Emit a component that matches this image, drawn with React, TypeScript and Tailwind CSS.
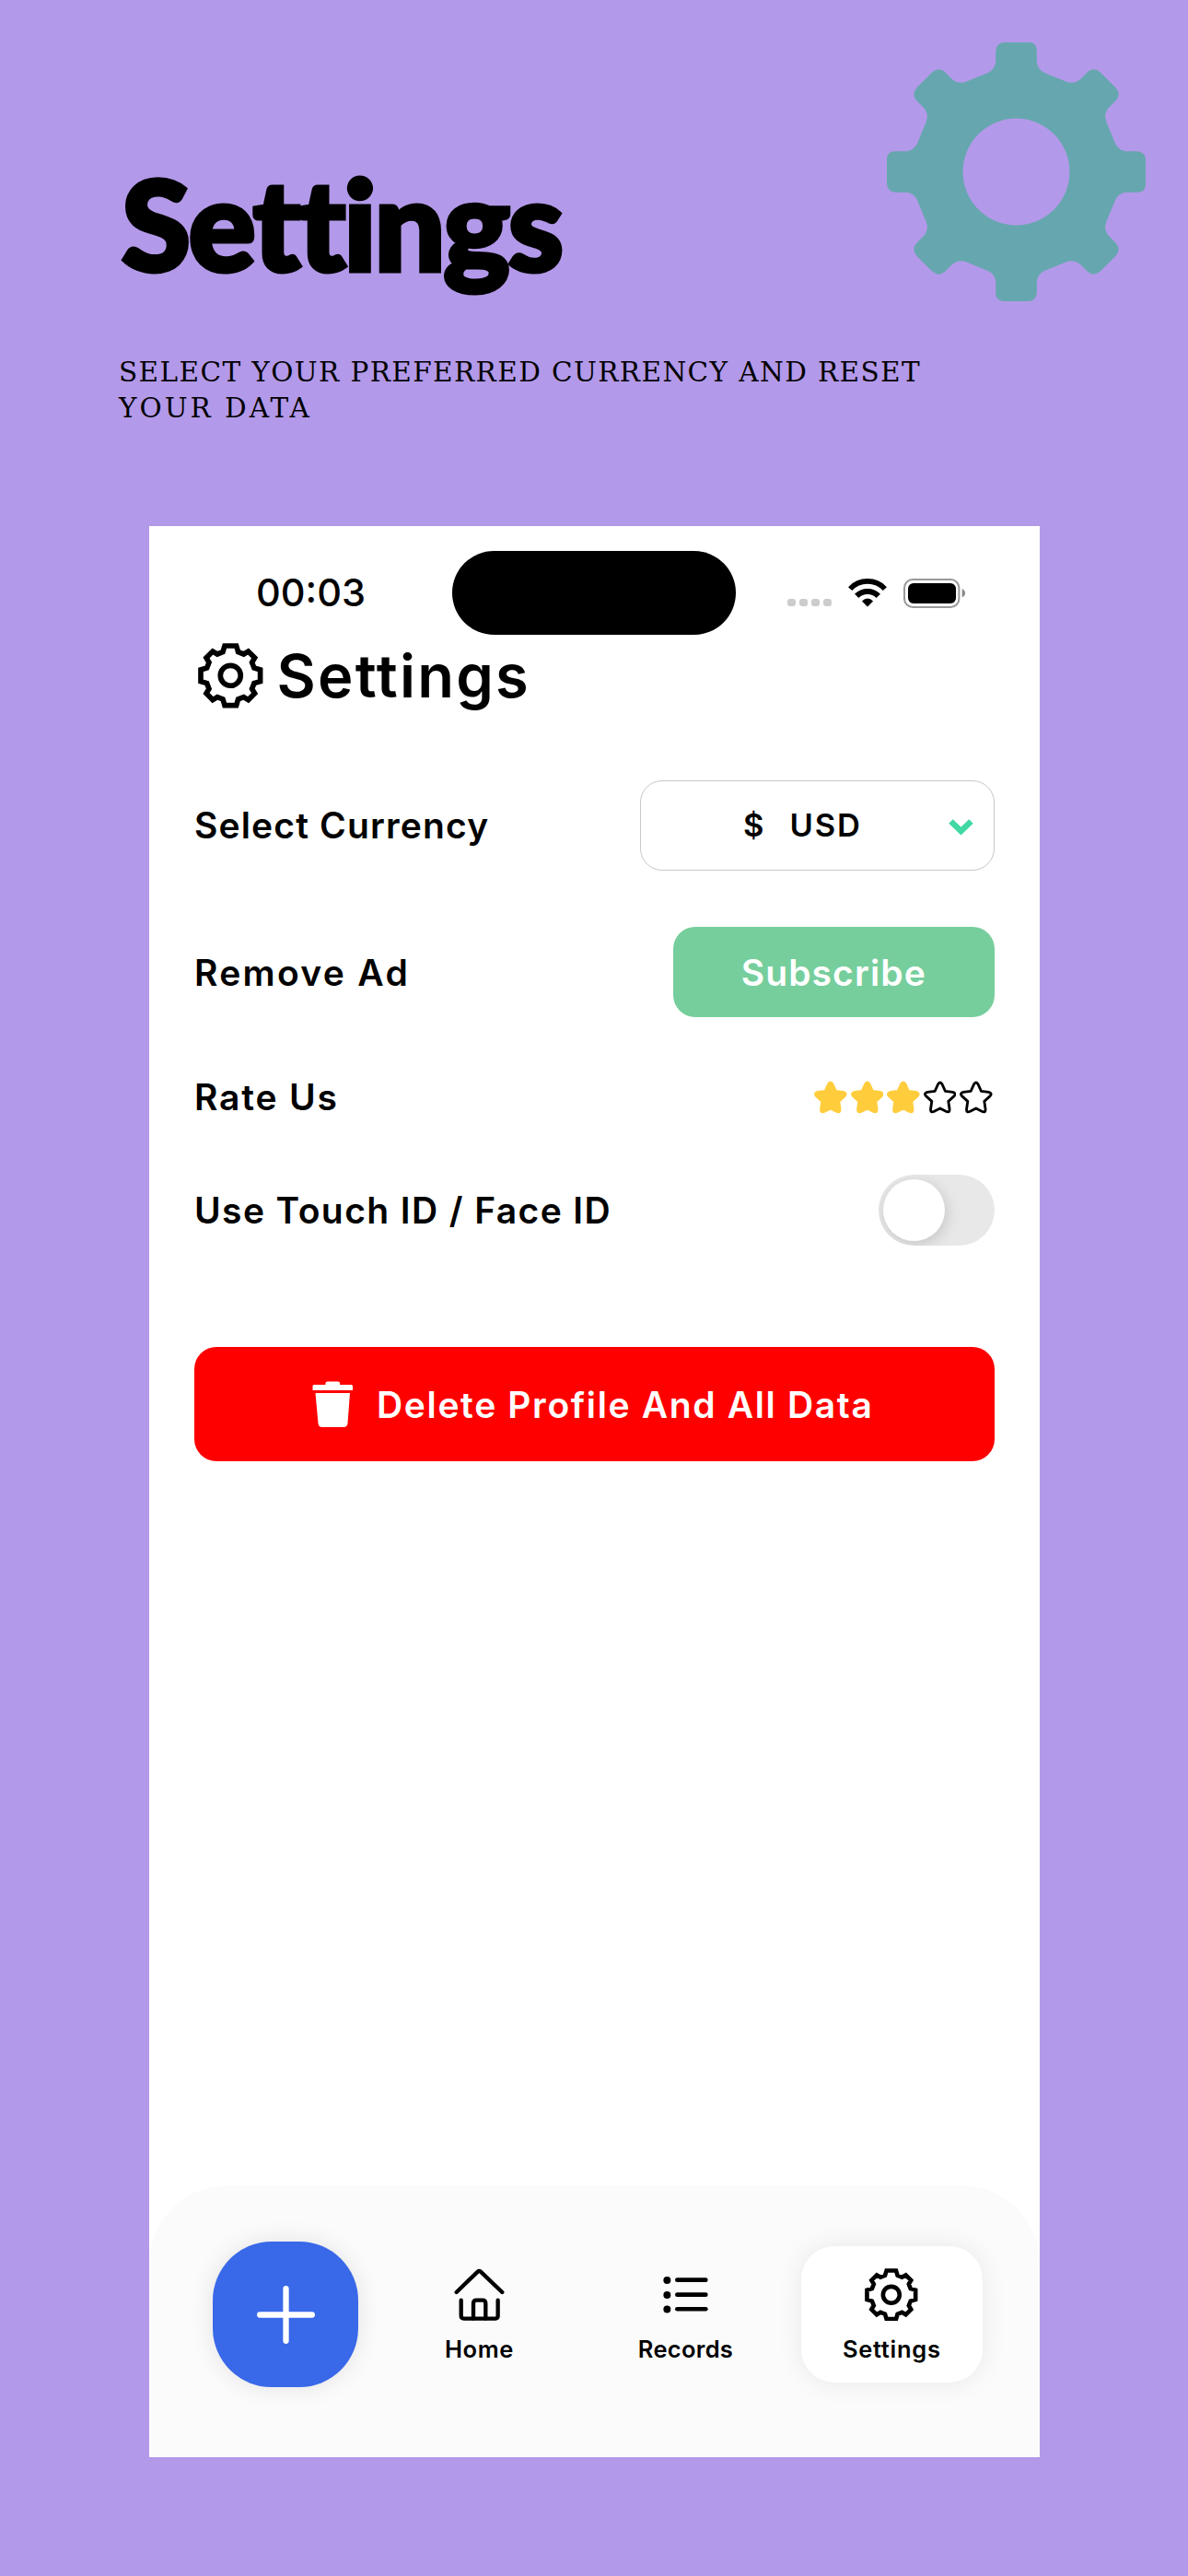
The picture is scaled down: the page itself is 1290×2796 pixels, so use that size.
import type { ReactNode } from 'react';

type Point = [number, number];

// Each gear is one quarter of its outline, turned around the centre four times.
const turn = ([x, y]: Point, times: number): Point => {
  let p: Point = [x, y];
  for (let i = 0; i < times; i++) p = [-p[1], p[0]];
  return p;
};

const coverQuarter: [string, Point[]][] = [
  ['L', [[43, -422]]],
  ['Q', [[67, -420], [67, -396]]],
  ['L', [[67, -358]]],
  ['Q', [[69, -334], [92, -323]]],
  ['L', [[162, -294]]],
  ['Q', [[187, -284], [208, -301]]],
  ['L', [[231, -324]]],
  ['Q', [[252, -344], [275, -324]]],
  ['L', [[324, -275]]],
  ['Q', [[344, -252], [324, -231]]],
  ['L', [[301, -208]]],
  ['Q', [[284, -187], [294, -162]]],
  ['L', [[323, -92]]],
  ['Q', [[334, -69], [358, -67]]],
  ['L', [[394, -67]]],
  ['Q', [[420, -65], [422, -40]]],
  ['L', [[422, 0]]],
];

const coverGearPath =
  'M0 -422' +
  [0, 1, 2, 3]
    .map((n) => coverQuarter.map(([cmd, pts]) => cmd + pts.map((p) => turn(p, n).join(' ')).join(' ')).join(''))
    .join('') +
  'Z';

const outlineQuarter: Point[] = [
  [19, -97], [25, -77], [43, -70], [58, -79], [79, -58], [70, -43], [77, -25], [97, -19],
];

const gearPoints = [0, 1, 2, 3]
  .flatMap((n) => outlineQuarter.map((p) => turn(p, n).join(',')))
  .join(' ');

function CoverGear() {
  return (
    <svg viewBox="-422 -422 844 844" className="size-[281px] shrink-0">
      <path d={coverGearPath} fill="#66a7af" />
      <circle r="174" fill="#b399e9" />
    </svg>
  );
}

function GearIcon({ className }: { className: string }) {
  return (
    <svg viewBox="-106 -106 212 212" fill="none" stroke="#000" strokeWidth="17" className={className}>
      <polygon points={gearPoints} />
      <circle r="33" />
    </svg>
  );
}

function WifiIcon() {
  return (
    <svg viewBox="784 203 124 92" fill="none" stroke="#000" strokeWidth="17" className="h-[31px] w-[42px]">
      <path d="M790 236A77 77 0 0 1 902 236" />
      <path d="M811 259A49 49 0 0 1 881 259" strokeWidth="18" />
      <path d="M828 276Q846 257 864 276L848 292Q846 294 844 292Z" fill="#000" stroke="none" />
    </svg>
  );
}

function BatteryIcon() {
  return (
    <svg viewBox="963 201 202 96" className="h-[32px] w-[67px]">
      <rect x="966" y="204" width="179" height="90" rx="27" fill="none" stroke="#999" strokeWidth="6" />
      <rect x="978" y="216" width="157" height="66" rx="18" />
      <path d="M1155 234Q1165 239 1165 248Q1165 257 1155 262Z" fill="#888" />
    </svg>
  );
}

function Star({ filled }: { filled: boolean }) {
  return (
    <svg
      viewBox="967.5 577 107 108"
      fill={filled ? '#ffcd3c' : 'none'}
      stroke={filled ? '#ffcd3c' : '#000'}
      strokeWidth="8.5"
      strokeLinejoin="round"
      className="h-[36px] w-[35.6px]"
    >
      <path d="M1014 589Q1021 577 1028 589L1038 611L1062 614Q1075 618 1067 627L1048 644L1052 671Q1052 682 1040 677L1021 667L1002 677Q990 682 990 671L994 644L975 627Q967 618 980 614L1004 611Z" />
    </svg>
  );
}

function TrashIcon() {
  return (
    <svg viewBox="339 1499 45 51" fill="#fff" className="h-[51px] w-[45px]">
      <path d="M341 1503H353.5V1501Q353.5 1499.5 355.5 1499.5H367Q369 1499.5 369 1501V1503H381.5Q383 1503 383 1504.5V1509H339.5V1504.5Q339.5 1503 341 1503Z" />
      <path d="M342.5 1512H380L377.5 1545Q377 1549 373 1549H349.5Q346 1549 345.5 1545Z" />
    </svg>
  );
}

function HomeIcon() {
  return (
    <svg
      viewBox="1030 336 165 173"
      fill="none"
      stroke="#000"
      strokeWidth="13"
      strokeLinecap="round"
      strokeLinejoin="round"
      className="h-[57.6px] w-[55px]"
    >
      <path d="M1038 414L1105 349Q1112 341 1119 349L1187 414" />
      <path d="M1053 440V491Q1053 500 1062 500H1165Q1173 500 1173 491V440" />
      <path d="M1093 500V451Q1093 440 1103 440H1123Q1133 440 1133 451V500" />
    </svg>
  );
}

function ListIcon() {
  return (
    <svg viewBox="240 335 147 173" stroke="#000" strokeWidth="14" strokeLinecap="round" className="h-[57.6px] w-[49px]">
      {[373, 421, 468].map((y) => (
        <g key={y}>
          <circle cx="253" cy={y + 1} r="12" stroke="none" />
          <path d={`M286 ${y}H379`} />
        </g>
      ))}
    </svg>
  );
}

function Label({ children, className }: { children: ReactNode; className: string }) {
  return <span className={`whitespace-nowrap pt-[2px] text-[39px] font-semibold ${className}`}>{children}</span>;
}

export default function App() {
  return (
    <div className="flex h-[2796px] w-[1290px] flex-col overflow-hidden bg-[#b399e9] font-['Inter',sans-serif] text-black">
      <header className="flex h-[571px] shrink-0 justify-between pl-[129px] pr-[46px]">
        <div className="w-[800px] shrink-0 pt-[167px]">
          <h1 className="pl-[3px] whitespace-nowrap font-['Lato',sans-serif] text-[136px] font-black leading-[150px] tracking-[-2.1px] [-webkit-text-stroke:5px_#000]">
            Settings
          </h1>
          <p className="mt-[68px] whitespace-nowrap font-['DejaVu_Serif',serif] text-[29.5px] leading-[38.7px] tracking-[1.4px]">
            SELECT YOUR PREFERRED CURRENCY AND RESET
            <br />
            <span className="tracking-[3px]">YOUR DATA</span>
          </p>
        </div>
        <div className="-ml-8 pt-[46px]">
          <CoverGear />
        </div>
      </header>

      <main className="ml-[162px] flex h-[2096px] w-[967px] shrink-0 flex-col bg-white">
        <div className="flex h-[118px] shrink-0 items-end">
          <div className="flex h-[91px] w-[329px] items-center justify-end pr-[94px]">
            <span className="text-[41.5px] font-medium">00:03</span>
          </div>
          <div className="h-[91px] w-[308px] rounded-full bg-black" />
          <div className="flex h-[91px] items-center pl-[56px]">
            <div className="mr-[18px] mt-[21px] flex gap-[4.6px]">
              {[0, 1, 2, 3].map((i) => (
                <span key={i} className="size-[8.5px] rounded-[3px] bg-[#ccc]" />
              ))}
            </div>
            <WifiIcon />
            <div className="ml-[18px]">
              <BatteryIcon />
            </div>
          </div>
        </div>

        <div className="flex h-[89px] shrink-0 items-center pl-[53px]">
          <GearIcon className="size-[70.6px]" />
          <h2 className="ml-[15px] whitespace-nowrap text-[65px] font-semibold tracking-[2.2px]">Settings</h2>
        </div>

        <section className="flex flex-col pl-[49px] pr-[49.5px]">
          <div className="mt-[68.5px] flex h-[98px] items-center justify-between">
            <Label className="tracking-[1.15px]">Select Currency</Label>
            <div className="flex h-full w-[384.5px] items-center rounded-[24px] border border-[#c8c8c8] pl-[111px] pr-[21.5px] text-[34.5px] font-semibold">
              <span>$</span>
              <span className="ml-[28px] tracking-[1.8px]">USD</span>
              <svg viewBox="0 0 27 18" fill="none" stroke="#42d8a2" strokeWidth="6.5" className="ml-auto mt-[4px] h-[18px] w-[27px]">
                <path d="M2.5 2.5L13.5 13L24.5 2.5" />
              </svg>
            </div>
          </div>

          <div className="mt-[61.5px] flex h-[98px] items-center justify-between">
            <Label className="tracking-[2.3px]">Remove Ad</Label>
            <button className="flex h-full w-[348.5px] items-center justify-center rounded-[24px] bg-[#76ce9c] text-white">
              <Label className="tracking-[1.1px]">Subscribe</Label>
            </button>
          </div>

          <div className="mt-[69px] flex h-[35px] items-center justify-between">
            <Label className="tracking-[1.8px]">Rate Us</Label>
            <div className="mr-[2px] flex gap-[3.8px]">
              {[1, 2, 3, 4, 5].map((n) => (
                <Star key={n} filled={n <= 3} />
              ))}
            </div>
          </div>

          <div className="mt-[67px] flex h-[77px] items-center justify-between">
            <Label className="tracking-[1.4px]">Use Touch ID / Face ID</Label>
            <div className="flex h-[77px] w-[125.5px] items-center overflow-hidden rounded-full bg-[#e8e8e8] pl-[5px]">
              <span className="size-[67px] rounded-full bg-white shadow-[2px_4px_16px_rgba(0,0,0,0.15)]" />
            </div>
          </div>

          <button className="mt-[110px] flex h-[124px] items-center rounded-[24px] bg-[#ff0000] pl-[128px] text-white">
            <TrashIcon />
            <Label className="ml-[25px] tracking-[1.65px]">Delete Profile And All Data</Label>
          </button>
        </section>

        <nav className="mt-auto flex h-[295px] rounded-t-[85px] bg-[#fbfbfb] pl-[69px] text-[25.5px] font-semibold leading-[30px]">
          <button className="mt-[61px] flex size-[158px] items-center justify-center rounded-[64px] bg-[#3968e9] shadow-[0_0_26px_rgba(0,0,0,0.1)]">
            <svg viewBox="0 0 63 63" stroke="#fff" strokeWidth="6.3" strokeLinecap="round" className="mt-px size-[63px]">
              <path d="M31.5 3.2V59.8M3.2 31.5H59.8" />
            </svg>
          </button>
          <div className="ml-[33px] mt-[89.5px] flex w-[197px] flex-col items-center">
            <HomeIcon />
            <span className="mt-[15.5px] tracking-[0.6px]">Home</span>
          </div>
          <div className="ml-[27px] mt-[89.5px] flex w-[197px] flex-col items-center">
            <ListIcon />
            <span className="mt-[15.5px] tracking-[0.3px]">Records</span>
          </div>
          <div className="ml-[26.5px] mt-[66px] flex h-[148px] w-[197.5px] flex-col items-center rounded-[36px] bg-white pt-[23.5px] shadow-[0_0_28px_rgba(0,0,0,0.08)]">
            <GearIcon className="size-[57.6px]" />
            <span className="mt-[15.5px] tracking-[0.7px]">Settings</span>
          </div>
        </nav>
      </main>
    </div>
  );
}
